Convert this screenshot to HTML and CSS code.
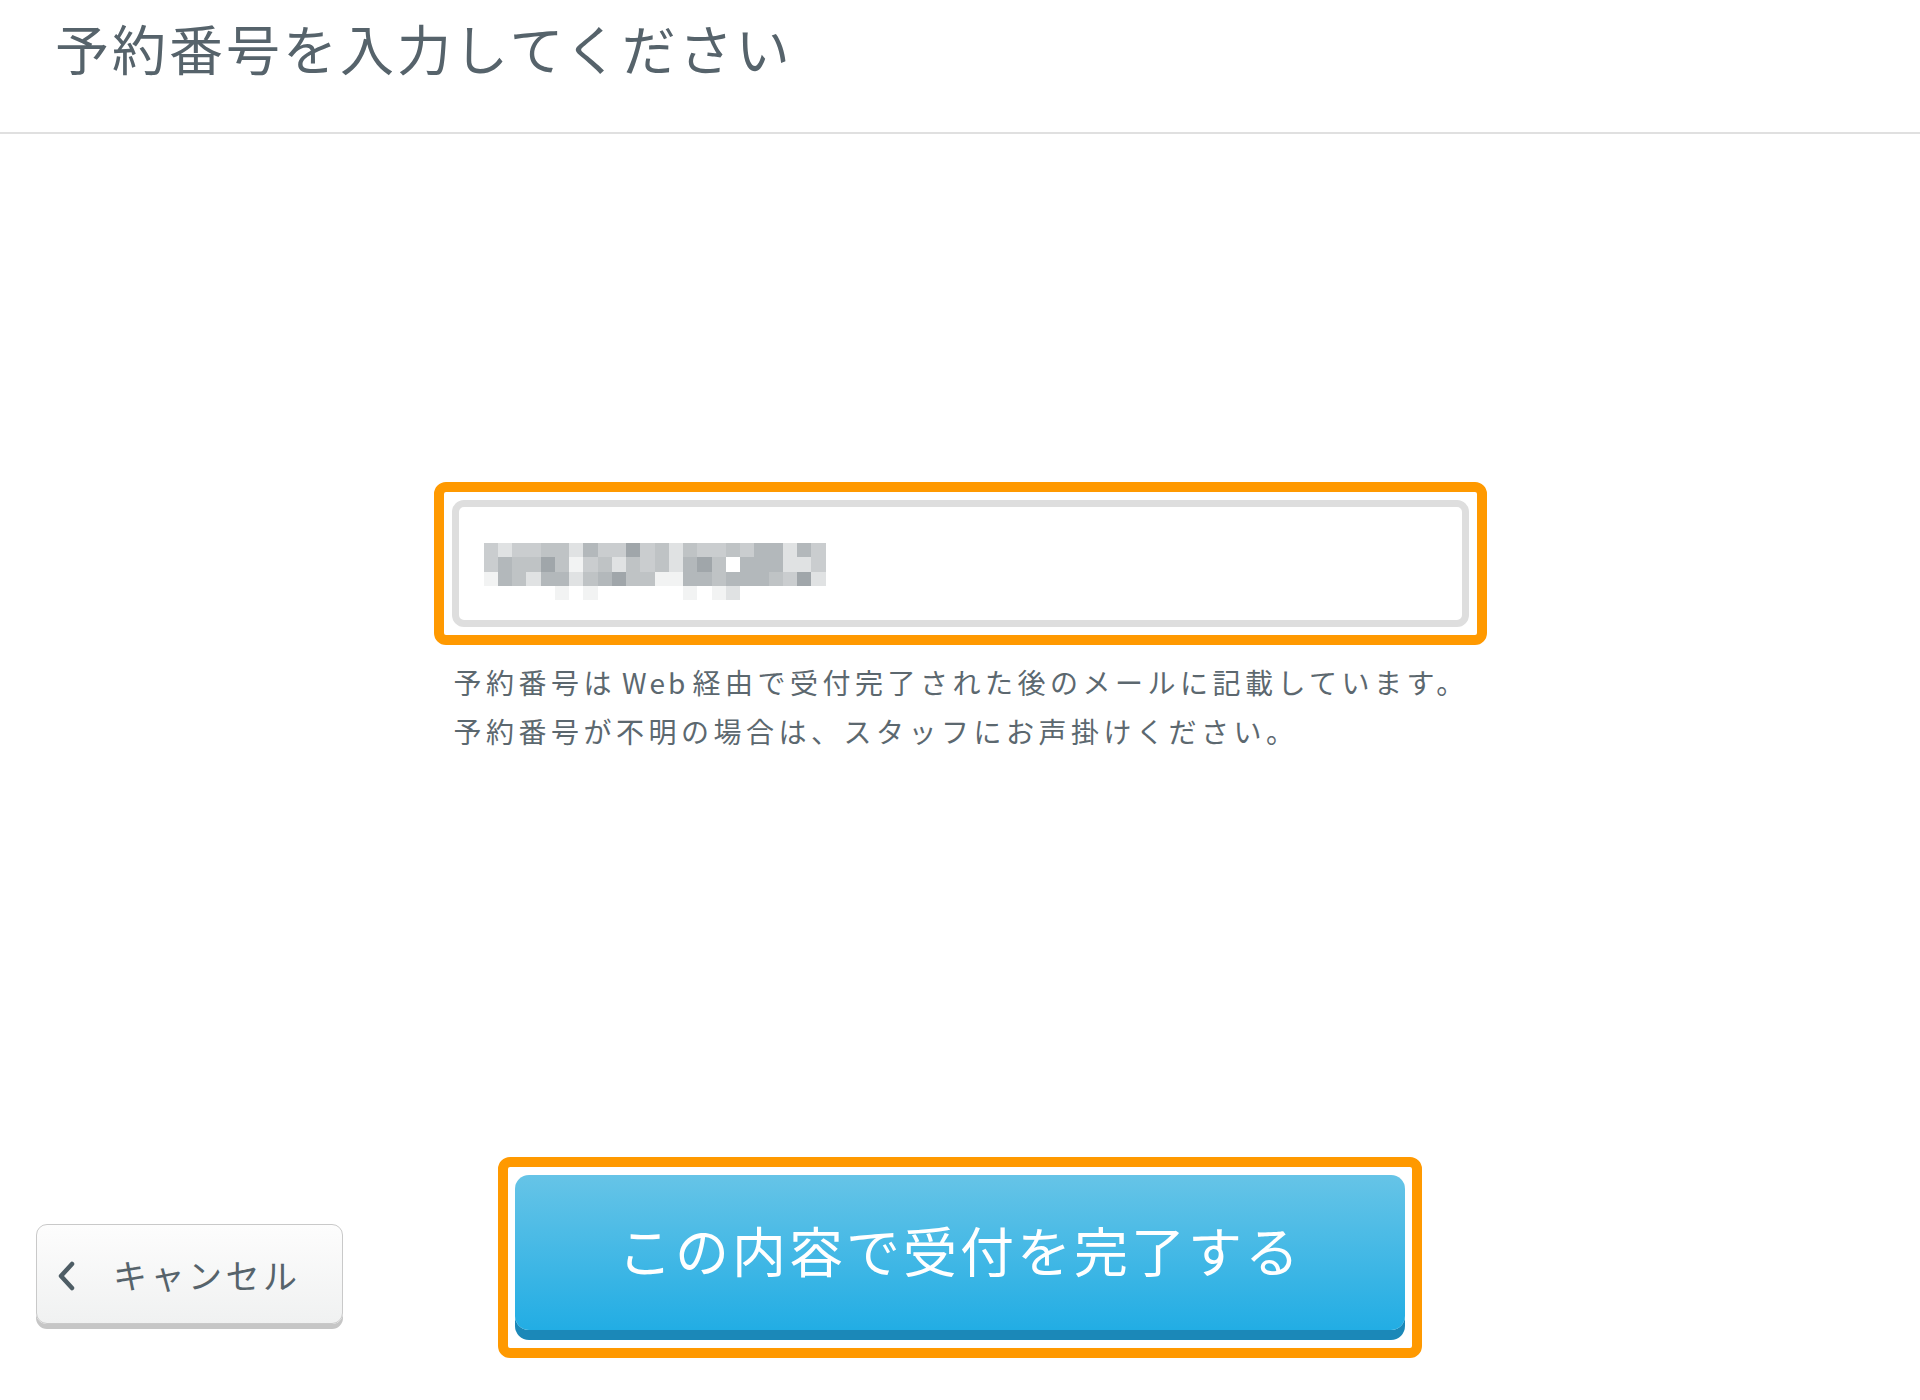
FILE: index.html
```html
<!DOCTYPE html>
<html lang="ja">
<head>
<meta charset="utf-8">
<title>予約番号を入力してください</title>
<link rel="stylesheet" href="styles.css">
</head>
<body>
<header class="header">
  <h1 class="title">予約番号を入力してください</h1>
</header>
<main class="main">
  <div class="field-wrap">
    <div class="field">
      <div class="mosaic">
        <i class="s3"></i><i class="s2"></i><i class="s3"></i><i class="s3"></i><i class="s4"></i><i class="s4"></i><i class="s2"></i><i class="s5"></i><i class="s3"></i><i class="s3"></i><i class="s6"></i><i class="s3"></i><i class="s4"></i><i class="s2"></i><i class="s4"></i><i class="s3"></i><i class="s3"></i><i class="s4"></i><i class="s3"></i><i class="s5"></i><i class="s5"></i><i class="s2"></i><i class="s5"></i><i class="s3"></i>
        <i class="s3"></i><i class="s5"></i><i class="s4"></i><i class="s4"></i><i class="s6"></i><i class="s4"></i><i class="s1"></i><i class="s3"></i><i class="s4"></i><i class="s2"></i><i class="s4"></i><i class="s3"></i><i class="s4"></i><i class="s2"></i><i class="s5"></i><i class="s6"></i><i class="s4"></i><i class="s0"></i><i class="s5"></i><i class="s5"></i><i class="s5"></i><i class="s2"></i><i class="s2"></i><i class="s3"></i>
        <i class="s1"></i><i class="s5"></i><i class="s4"></i><i class="s2"></i><i class="s5"></i><i class="s5"></i><i class="s2"></i><i class="s4"></i><i class="s5"></i><i class="s6"></i><i class="s4"></i><i class="s4"></i><i class="s1"></i><i class="s1"></i><i class="s5"></i><i class="s5"></i><i class="s4"></i><i class="s5"></i><i class="s5"></i><i class="s5"></i><i class="s4"></i><i class="s3"></i><i class="s6"></i><i class="s2"></i>
        <i class="s0"></i><i class="s0"></i><i class="s0"></i><i class="s0"></i><i class="s0"></i><i class="s1"></i><i class="s0"></i><i class="s1"></i><i class="s0"></i><i class="s0"></i><i class="s0"></i><i class="s0"></i><i class="s0"></i><i class="s0"></i><i class="s1"></i><i class="s0"></i><i class="s1"></i><i class="s2"></i><i class="s0"></i><i class="s0"></i><i class="s0"></i><i class="s0"></i><i class="s0"></i><i class="s0"></i>
      </div>
    </div>
  </div>
  <p class="help">予約番号は<span class="latin">Web</span>経由で受付完了された後のメールに記載しています。<br>予約番号が不明の場合は、スタッフにお声掛けください。</p>
</main>
<footer class="footer">
  <button class="cancel" type="button">
    <svg class="chev" width="20" height="30" viewBox="0 0 20 30"><polyline points="16,3 5,15 16,27" fill="none" stroke="#4e5d65" stroke-width="4.5" stroke-linecap="round" stroke-linejoin="round"/></svg>
    <span class="cancel-label">キャンセル</span>
  </button>
  <div class="submit-wrap">
    <button class="submit" type="button">この内容で受付を完了する</button>
  </div>
</footer>
</body>
</html>
```
FILE: styles.css
```css
* { box-sizing: border-box; }
html, body { margin: 0; padding: 0; background: #fff; }
body {
  width: 1920px;
  height: 1400px;
  font-family: "Noto Sans CJK JP", "Noto Sans", sans-serif;
  color: #56636b;
}
.header {
  height: 134px;
  border-bottom: 2px solid #e0e0e0;
  padding-left: 55px;
}
.title {
  margin: 0;
  font-size: 54px;
  font-weight: 400;
  line-height: 96px;
  letter-spacing: 3px;
  color: #56636b;
}
.main {
  display: flex;
  flex-direction: column;
  align-items: center;
  padding-top: 348px;
}
.field-wrap {
  width: 1053px;
  height: 163px;
  border: 10px solid #ff9900;
  border-radius: 12px;
  padding: 8px;
  background: #fff;
}
.field {
  height: 100%;
  border: 7px solid #dedede;
  border-radius: 12px;
  padding: 36px 0 0 25px;
  background: #fff;
}
.mosaic {
  display: grid;
  grid-template-columns: repeat(24, 14.25px);
  grid-auto-rows: 14.25px;
  width: max-content;
}
.mosaic i { display: block; }
.s0 { background: #ffffff; }
.s1 { background: #f2f3f3; }
.s2 { background: #e0e2e3; }
.s3 { background: #cacdcf; }
.s4 { background: #bfc3c5; }
.s5 { background: #b3b8bb; }
.s6 { background: #a0a6aa; }
.help {
  width: 1053px;
  margin: 13px 0 0;
  padding-left: 20px;
  font-size: 28px;
  line-height: 49px;
  letter-spacing: 4.5px;
  color: #5c686f;
}
.latin { margin: 0 4px 0 6px; letter-spacing: 3px; }
.footer {
  margin-top: 401px;
  display: grid;
  grid-template-columns: 1fr 924px 1fr;
  align-items: end;
}
.cancel {
  justify-self: start;
  margin: 0 0 34px 36px;
  width: 307px;
  height: 100px;
  border: 1px solid #c9c9c9;
  border-radius: 11px;
  background: linear-gradient(#fdfdfd, #f0f1f1);
  box-shadow: 0 5px 0 #c6c6c6;
  display: flex;
  align-items: center;
  padding: 0 0 0 19px;
  font-family: inherit;
  cursor: pointer;
}
.chev { flex: none; margin-top: 4px; }
.cancel-label {
  margin-left: 37px;
  font-size: 34px;
  letter-spacing: 3.5px;
  color: #56636b;
}
.submit-wrap {
  grid-column: 2;
  height: 201px;
  border: 10px solid #ff9900;
  border-radius: 12px;
  padding: 8px 7px;
  background: #fff;
}
.submit {
  display: block;
  width: 100%;
  height: 155px;
  border: 0;
  border-radius: 14px;
  background: linear-gradient(#66c4e7, #22ade4);
  box-shadow: 0 10px 0 #1b88b8;
  color: #fff;
  font-family: inherit;
  font-size: 54px;
  font-weight: 400;
  letter-spacing: 3px;
  padding: 0 0 6px;
  cursor: pointer;
}
```
